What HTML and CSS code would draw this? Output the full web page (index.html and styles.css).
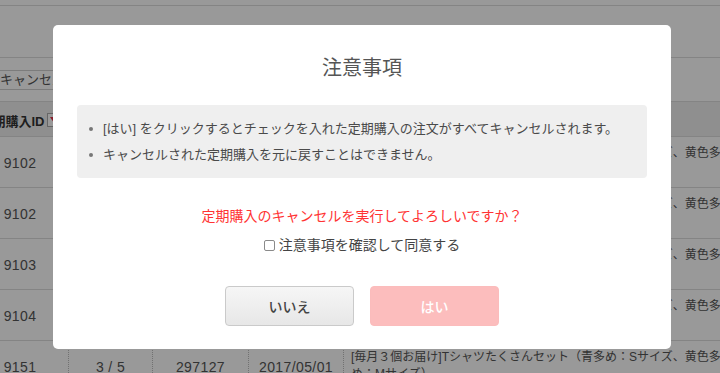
FILE: index.html
```html
<!DOCTYPE html>
<html lang="ja">
<head>
<meta charset="utf-8">
<title>定期購入</title>
<link rel="stylesheet" href="styles.css">
</head>
<body>
<div class="page">
  <div class="top"></div>
  <div class="band"></div>
  <div class="toolbar"><button class="tbtn" type="button">キャンセル</button></div>
  <div class="table">
    <div class="row head">
      <div class="cell">定期購入ID<span class="sort"><svg width="8" height="6" viewBox="0 0 8 6"><path d="M0 0h8L4 6z" fill="#e0334a"/></svg></span></div>
      <div class="cell">回数</div>
      <div class="cell">注文番号</div>
      <div class="cell">開始日</div>
      <div class="cell name">商品名</div>
    </div>
    <div class="row">
      <div class="cell num">9102</div><div class="cell num">1 / 5</div><div class="cell num">297100</div><div class="cell num">2017/04/01</div>
      <div class="cell name">[毎月３個お届け]Tシャツたくさんセット（青多め：Sサイズ、黄色多<br>め：Mサイズ）</div>
    </div>
    <div class="row">
      <div class="cell num">9102</div><div class="cell num">2 / 5</div><div class="cell num">297101</div><div class="cell num">2017/04/01</div>
      <div class="cell name">[毎月３個お届け]Tシャツたくさんセット（青多め：Sサイズ、黄色多<br>め：Mサイズ）</div>
    </div>
    <div class="row">
      <div class="cell num">9103</div><div class="cell num">1 / 5</div><div class="cell num">297110</div><div class="cell num">2017/04/15</div>
      <div class="cell name">[毎月３個お届け]Tシャツたくさんセット（青多め：Sサイズ、黄色多<br>め：Mサイズ）</div>
    </div>
    <div class="row">
      <div class="cell num">9104</div><div class="cell num">2 / 5</div><div class="cell num">297115</div><div class="cell num">2017/04/20</div>
      <div class="cell name">[毎月３個お届け]Tシャツたくさんセット（青多め：Sサイズ、黄色多<br>め：Mサイズ）</div>
    </div>
    <div class="row">
      <div class="cell num">9151</div><div class="cell num">3 / 5</div><div class="cell num">297127</div><div class="cell num">2017/05/01</div>
      <div class="cell name">[毎月３個お届け]Tシャツたくさんセット（青多め：Sサイズ、黄色多<br>め：Mサイズ）</div>
    </div>
  </div>
</div>

<div class="overlay">
  <div class="modal">
    <h2 class="title">注意事項</h2>
    <ul class="notes">
      <li>[はい] をクリックするとチェックを入れた定期購入の注文がすべてキャンセルされます。</li>
      <li>キャンセルされた定期購入を元に戻すことはできません。</li>
    </ul>
    <p class="confirm">定期購入のキャンセルを実行してよろしいですか？</p>
    <label class="agree"><input type="checkbox" class="check">注意事項を確認して同意する</label>
    <div class="actions">
      <button class="btn btn-no" type="button">いいえ</button>
      <button class="btn btn-yes" type="button">はい</button>
    </div>
  </div>
</div>
</body>
</html>
```

FILE: styles.css
```css
html, body {
  margin: 0;
  padding: 0;
  background: #fff;
  overflow: hidden;
}
body {
  font-family: "Liberation Sans", "Noto Sans CJK JP", sans-serif;
  color: #555;
}
.page {
  width: 760px;
}
.top {
  height: 5px;
  border-bottom: 1px solid #dcdcdc;
}
.band {
  height: 51px;
  border-bottom: 1px solid #dcdcdc;
}
.toolbar {
  height: 44px;
  box-sizing: border-box;
  padding-top: 12px;
  margin-left: -12px;
  border-bottom: 1px solid #dcdcdc;
}
.tbtn {
  display: block;
  height: 20px;
  box-sizing: border-box;
  padding: 0 11px;
  border: 1px solid #cfcfcf;
  border-radius: 2px;
  background: #fff;
  font-family: "Liberation Sans", "Noto Sans CJK JP", sans-serif;
  font-size: 13px;
  line-height: 18px;
  color: #555;
}
.table {
  margin-left: -28px;
}
.row {
  display: grid;
  grid-template-columns: 96px 84px 96px 95px 420px;
  height: 51px;
  box-sizing: border-box;
  border-bottom: 1px solid #dcdcdc;
}
.row.head {
  height: 35px;
  background: #eee;
}
.cell {
  display: flex;
  align-items: center;
  justify-content: center;
  font-size: 14px;
  color: #555;
  border-left: 1px dotted #bdbdbd;
  white-space: nowrap;
}
.cell:first-child {
  border-left: none;
}
.cell.num {
  letter-spacing: 0.4px;
  padding-top: 2px;
}
.head .cell {
  font-size: 13px;
  font-weight: bold;
  color: #333;
  border-left: none;
  padding-top: 2px;
}
.cell.name {
  justify-content: flex-start;
  padding-left: 7px;
  font-size: 12px;
  line-height: 17px;
}
.sort {
  display: inline-flex;
  align-items: center;
  justify-content: center;
  width: 12px;
  height: 12px;
  margin-left: 2px;
  border: 1px solid #aaa;
  background: #fff;
}
.overlay {
  position: fixed;
  inset: 0;
  background: rgba(0, 0, 0, 0.4);
  display: flex;
  justify-content: center;
  align-items: flex-start;
  padding: 25px 0 0 4px;
  box-sizing: border-box;
}
.modal {
  width: 618px;
  box-sizing: border-box;
  background: #fff;
  border-radius: 5px;
  padding: 28px 24px 23px;
  font-family: "Liberation Sans", "Noto Sans CJK JP", sans-serif;
}
.title {
  margin: 0;
  font-size: 20px;
  line-height: 30px;
  font-weight: normal;
  text-align: center;
  color: #555;
}
.notes {
  margin: 22px 0 0;
  padding: 11px 0 10px 12px;
  list-style: none;
  background: #efefef;
  border-radius: 4px;
}
.notes li {
  display: flex;
  align-items: center;
  font-size: 13px;
  line-height: 26px;
  color: #4a4a4a;
}
.notes li::before {
  content: "";
  flex: none;
  width: 4px;
  height: 4px;
  border-radius: 50%;
  background: #777;
  margin-right: 10px;
}
.confirm {
  margin: 28px 0 0;
  text-align: center;
  color: #ff3333;
  font-size: 14px;
  line-height: 20px;
}
.agree {
  margin-top: 9px;
  display: flex;
  justify-content: center;
  align-items: center;
  gap: 4px;
  font-size: 14px;
  line-height: 20px;
  color: #444;
}
.check {
  appearance: none;
  -webkit-appearance: none;
  width: 11px;
  height: 11px;
  margin: 0;
  box-sizing: border-box;
  border: 1px solid #8a8a8a;
  border-radius: 2px;
  background: #fff;
}
.actions {
  margin-top: 31px;
  display: flex;
  justify-content: center;
  gap: 16px;
}
.btn {
  width: 129px;
  height: 40px;
  box-sizing: border-box;
  border-radius: 4px;
  font-family: "Liberation Sans", "Noto Sans CJK JP", sans-serif;
  font-size: 14px;
  font-weight: 500;
  padding: 0;
}
.btn-no {
  border: 1px solid #cacaca;
  background: linear-gradient(#f6f6f6, #e7e7e7);
  color: #444;
}
.btn-yes {
  border: 1px solid #fbbcbc;
  background: #fcbdbd;
  color: #fff;
}
```
